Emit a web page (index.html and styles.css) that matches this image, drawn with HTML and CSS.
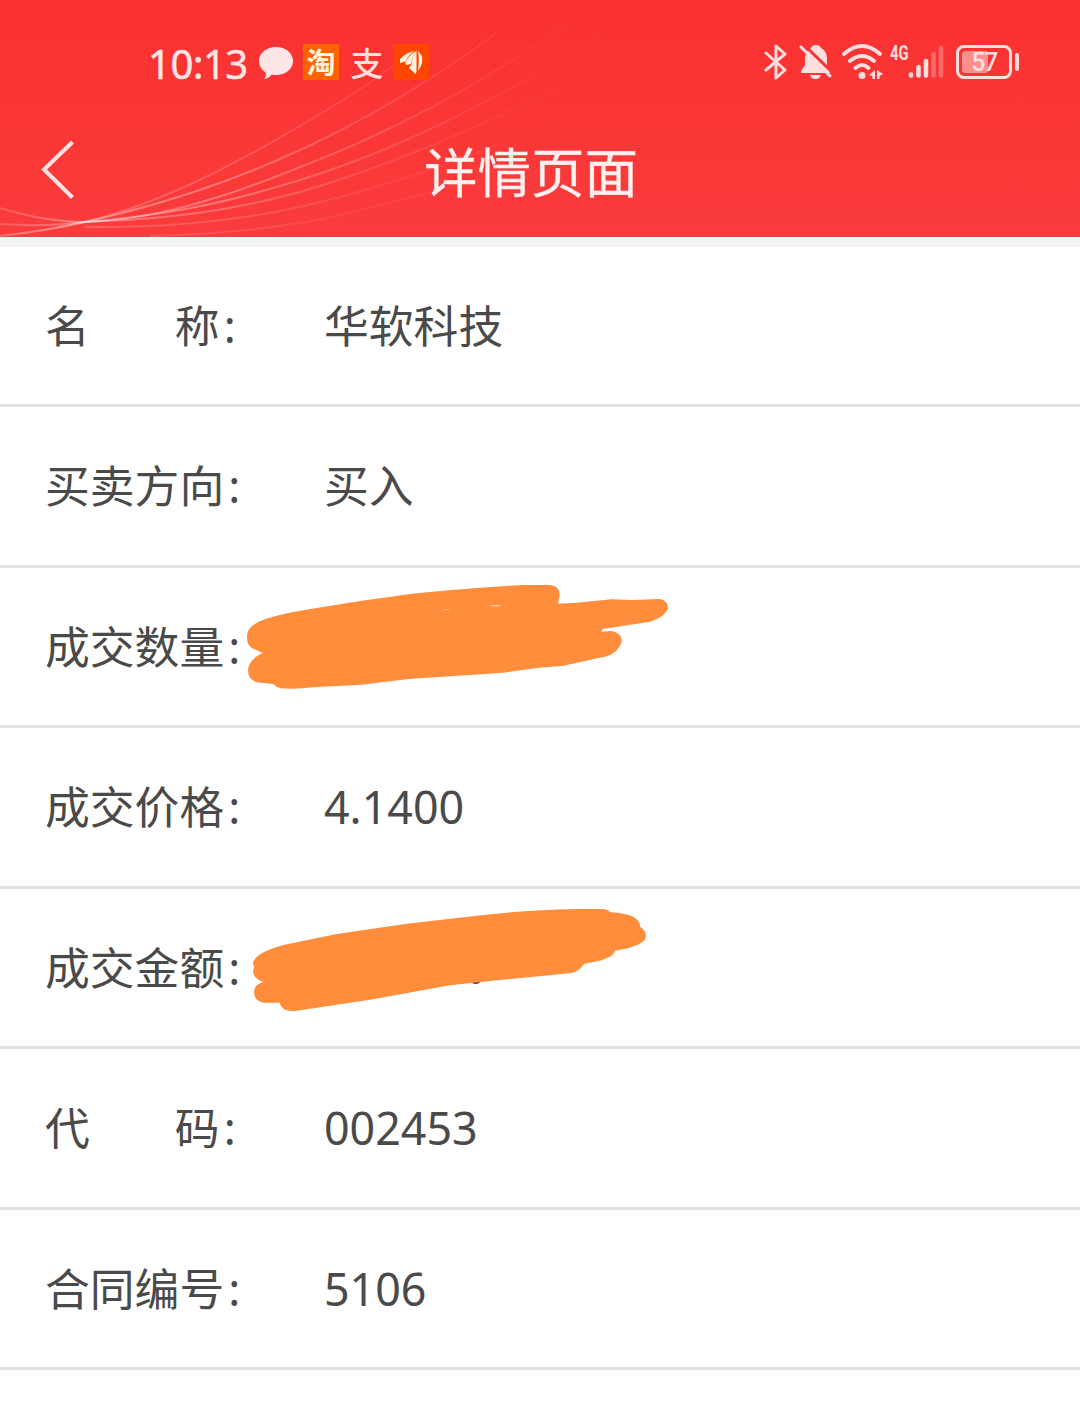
FILE: index.html
```html
<!DOCTYPE html>
<html lang="zh-CN">
<head>
  <meta charset="UTF-8">
  <meta name="viewport" content="width=device-width, initial-scale=1.0">
  <title>详情页面</title>
  <link rel="stylesheet" href="styles.css">
</head>
<body>
  <header class="header">
    <svg class="header-lines" viewBox="0 0 1080 237" fill="none" stroke-width="2">
      <defs>
        <linearGradient id="fade" gradientUnits="userSpaceOnUse" x1="0" y1="0" x2="640" y2="0">
          <stop offset="0" stop-color="#fff" stop-opacity="0.16"/>
          <stop offset="0.14" stop-color="#fff" stop-opacity="0.36"/>
          <stop offset="0.35" stop-color="#fff" stop-opacity="0.3"/>
          <stop offset="0.55" stop-color="#fff" stop-opacity="0.15"/>
          <stop offset="0.8" stop-color="#fff" stop-opacity="0.04"/>
          <stop offset="0.95" stop-color="#fff" stop-opacity="0"/>
        </linearGradient>
      </defs>
      <g stroke="url(#fade)">
        <path d="M0 236Q45 231 85 222C165 202 240 163 340 102Q375 80 400 60" opacity=".6"/>
        <path d="M0 236Q45 231 85 222C165 204 240 178 300 150Q400 104 495 34"/>
        <path d="M0 208Q45 222 85 222C150 220 220 200 300 167Q440 114 570 22"/>
        <path d="M0 224Q45 227 85 222C160 216 220 205 300 180Q450 134 630 16"/>
        <path d="M85 222C170 219 230 211 300 192Q460 145 670 30" opacity=".8"/>
        <path d="M85 227C170 228 240 220 300 207Q460 170 660 76" opacity=".5"/>
        <path d="M150 236Q230 234 300 223T650 130" opacity=".4"/>
      </g>
    </svg>

    <div class="status-bar">
      <div class="status-left">
        <span class="time">10:13</span>
        <svg class="chat" width="36" height="34" viewBox="0 0 36 34">
          <path fill="#ffe6e6" d="M18 1C27.500 1 35 7 35 15S27.500 29 18 29Q15.500 29 13.500 28.500Q11 32.500 6 33Q9 29.500 7.500 26.500Q1 22 1 15C1 7 8.500 1 18 1Z"/>
        </svg>
        <span class="app app-tao">淘</span>
        <span class="app app-zhi">支</span>
        <span class="app app-east">
          <svg width="36" height="36" viewBox="0 0 36 36" fill="#fff3df">
            <path d="M7 19V15Q13 8.500 21.500 7Q15.500 11 12.500 17.500Z"/>
            <path d="M12 19.500Q15 12 22.500 7.500Q19 13 18 20L13.500 21Z"/>
            <path d="M16 24Q19.500 20 19.500 14Q21 10 23.500 6V28L22.500 30Z"/>
            <path d="M25 7L29 12Q30.500 20 25 27Q26.500 16 25 7Z"/>
          </svg>
        </span>
      </div>

      <div class="status-right">
        <svg width="24" height="38" viewBox="0 0 24 38" fill="none" stroke="#ffdede" stroke-width="3" stroke-linejoin="round" stroke-linecap="round">
          <path d="M2 10L21 27L12 35V3L21 11L2 27"/>
        </svg>
        <svg class="bell" width="34" height="36" viewBox="0 0 34 36">
          <path fill="#ffdede" d="M12 4Q13 1 17 1T22 4Q28 7 28 15V23L31 28V29H2V27L6 21V13Q7 7 12 4ZM11 31H22Q21 35 16.500 35T11 31Z"/>
          <path stroke="#fa3434" stroke-width="3" d="M4 0L34 29"/>
          <path stroke="#ffdede" stroke-width="3" stroke-linecap="round" d="M2 3L31 32"/>
        </svg>
        <svg class="wifi" width="42" height="36" viewBox="0 0 42 36" fill="none" stroke="#ffdede" stroke-width="3.800" stroke-linecap="round">
          <path d="M2 10Q20 -6 38 10M8 17Q20 7 32 17M13.500 24Q20 18 26.500 24"/>
          <circle cx="20" cy="31.500" r="3.500" fill="#ffdede" stroke="none"/>
          <path fill="#ffdede" stroke="none" d="M33 26V35H30.500V32L27 31ZM35 26L41 30L37.500 32V35H35Z"/>
        </svg>
        <div class="signal">
          <span class="network">4G</span>
          <svg width="36" height="34" viewBox="0 0 36 34" stroke="#ffdede" stroke-width="4.600" stroke-linecap="round">
            <path d="M3 29.500V30.500M10.500 22V30.500M18 16V30.500"/>
            <path stroke-opacity=".32" d="M25.500 9V30.500M33 3V30.500"/>
          </svg>
        </div>
        <div class="battery">
          <span class="battery-level"></span>
          <span class="battery-text">57</span>
        </div>
        <span class="battery-tip"></span>
      </div>
    </div>

    <div class="title-bar">
      <svg class="back" width="34" height="60" viewBox="0 0 34 60" fill="none" stroke="#ffe3e3" stroke-width="4">
        <path d="M32.500 2L4 29.500L32.500 57.500"/>
      </svg>
      <h1>详情页面</h1>
    </div>
  </header>

  <main class="list">
    <div class="row">
      <div class="label label-short"><span>名</span><span>称<i>:</i></span></div>
      <div class="value">华软科技</div>
    </div>
    <div class="row">
      <div class="label">买卖方向<i>:</i></div>
      <div class="value">买入</div>
    </div>
    <div class="row">
      <div class="label">成交数量<i>:</i></div>
      <svg class="scribble" width="450" height="125" viewBox="0 0 1350 375">
        <path fill="#ff8d3b" d="M51 190C51 150 90 135 190 114C330 90 430 75 560 58C680 46 780 38 880 33H960Q990 36 989 65L984 89L1040 86L1145 76L1205 78L1290 75Q1314 80 1314 103Q1305 130 1260 143L1118 165L1113 173L1145 171Q1175 178 1176 202Q1165 236 1130 247L1000 275L920 282L820 296L535 315L395 332L250 340Q200 346 150 343Q136 338 130 330L80 325Q54 315 54 290Q54 258 98 237L65 222Q51 212 51 190Z"/>
        <path fill="#fff" d="M775 95Q797 92 817 95Q797 98 775 95ZM635 109Q650 105 662 107Q650 107 635 109Z"/>
      </svg>
    </div>
    <div class="row">
      <div class="label">成交价格<i>:</i></div>
      <div class="value">4.1400</div>
    </div>
    <div class="row">
      <div class="label">成交金额<i>:</i></div>
      <svg class="scribble" width="450" height="125" viewBox="0 0 1350 375">
        <ellipse cx="737" cy="259" rx="13" ry="8" fill="#4a4a4a"/>
        <path fill="#ff8d3b" d="M69 205Q72 175 160 150L320 117L530 86L740 62Q880 46 1040 42H1120Q1133 43 1142 52Q1230 56 1230 95Q1248 105 1248 125Q1242 153 1155 167Q1150 193 1063 206Q1045 230 1025 234L750 261L660 271L420 314L200 347Q155 352 149 323H100Q72 318 72 290Q74 268 100 261Q69 250 69 228L72 216Z"/>
      </svg>
    </div>
    <div class="row">
      <div class="label label-short"><span>代</span><span>码<i>:</i></span></div>
      <div class="value">002453</div>
    </div>
    <div class="row">
      <div class="label">合同编号<i>:</i></div>
      <div class="value">5106</div>
    </div>
  </main>
</body>
</html>
```

FILE: styles.css
```css
* {
  box-sizing: border-box;
}
body {
  margin: 0;
  height: 1404px;
  overflow: hidden;
  background: #fff;
  color: #4a4a4a;
  font-family: "Noto Sans", "Noto Sans CJK SC", sans-serif;
}
svg {
  display: block;
  flex: none;
}
.header {
  position: relative;
  height: 237px;
  background: linear-gradient(#fa3030, #fa3c3c);
  border-bottom: 1px solid #d04a48;
}
.header-lines {
  position: absolute;
  top: 0;
  left: 0;
  width: 1080px;
  height: 237px;
}
.status-bar {
  position: relative;
  display: flex;
  justify-content: space-between;
  height: 124px;
  padding: 0 61px 0 148px;
}
.status-left,
.status-right {
  display: flex;
  align-items: center;
  height: 124px;
}
.time {
  width: 110px;
  font-size: 40px;
  line-height: 40px;
  color: #ffe6e6;
  padding-top: 4px;
  letter-spacing: -0.5px;
  -webkit-text-stroke: 0.5px #ffe6e6;
}
.chat {
  margin-top: 2px;
}
.app {
  display: block;
  width: 36px;
  height: 36px;
  text-align: center;
  line-height: 34px;
  font-weight: 700;
  font-family: "Noto Sans CJK SC", sans-serif;
}
.app-tao {
  margin-left: 9px;
  background: #ff6200;
  color: #fff6dc;
  font-size: 29px;
}
.app-zhi {
  margin-left: 10px;
  font-size: 33px;
  font-weight: 500;
  line-height: 36px;
  color: #ffdede;
}
.app-east {
  margin-left: 8px;
  background: #ff4500;
}
.bell {
  margin-left: 11px;
}
.wifi {
  margin-left: 9px;
}
.signal {
  display: flex;
  margin-left: 6px;
}
.network {
  width: 18px;
  font: 700 20px/20px "Roboto", sans-serif;
  color: #ffdede;
  transform: scaleX(0.74);
  transform-origin: left;
  margin-top: -2px;
}
.battery {
  position: relative;
  width: 56px;
  height: 34px;
  margin-left: 12px;
  border: 3px solid #ffdede;
  border-radius: 8px;
}
.battery-level {
  position: absolute;
  top: 3px;
  left: 3px;
  width: 26px;
  height: 22px;
  border-radius: 3px;
  background: #fd8e8e;
}
.battery-text {
  position: absolute;
  inset: 0;
  text-align: center;
  font: 500 25px/29px "Roboto", sans-serif;
  letter-spacing: -1.5px;
  color: #ffdede;
}
.battery-tip {
  width: 4px;
  height: 18px;
  margin-left: 3px;
  border-radius: 2px;
  background: #ffdede;
}
.title-bar {
  position: relative;
  display: flex;
  align-items: center;
  height: 92px;
  padding-left: 40px;
}
.title-bar h1 {
  margin: 0 0 0 350px;
  font: 400 53.5px/80px "Noto Sans CJK SC", sans-serif;
  color: #fff0f0;
  -webkit-text-stroke: 0.3px #fff0f0;
}
.list {
  border-top: 10px solid #f4f4f4;
}
.row {
  position: relative;
  display: flex;
  align-items: center;
  height: 160.5px;
  padding: 1px 0 0 45px;
  border-bottom: 3px solid #e2e2e2;
  font-size: 44.8px;
  line-height: 60px;
}
.row:first-child {
  height: 160px;
}
.label {
  width: 279px;
  white-space: nowrap;
}
.label i {
  font-style: normal;
  margin-left: 4px;
}
.label-short {
  display: flex;
  gap: 85px;
}
/* hand-drawn marker over the hidden amounts */
.scribble {
  position: absolute;
  top: 6.5px;
  left: 230px;
}
```
